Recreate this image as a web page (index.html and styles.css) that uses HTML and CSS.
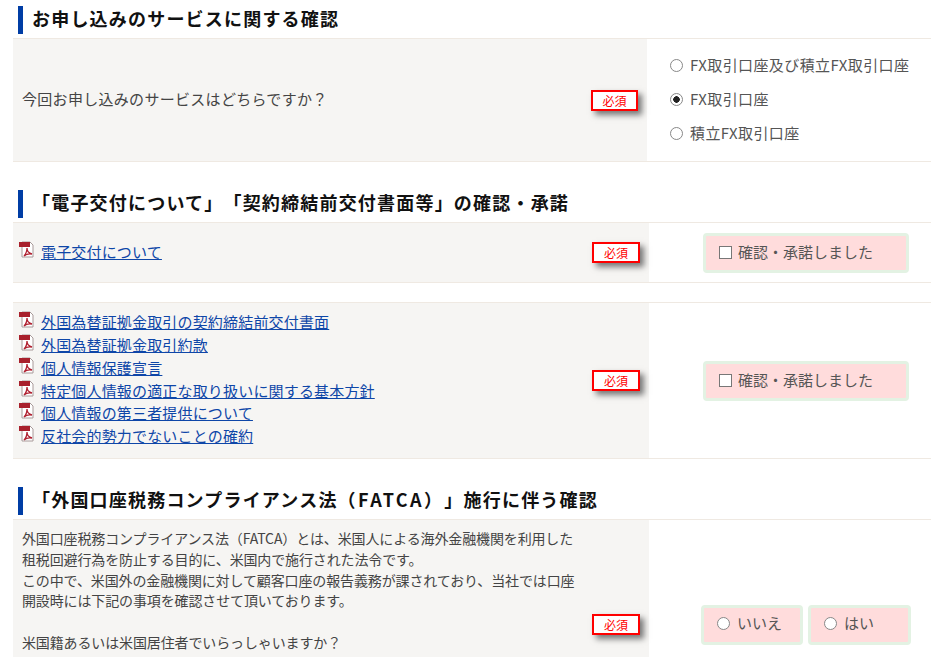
FILE: index.html
```html
<!DOCTYPE html>
<html lang="ja">
<head>
  <meta charset="UTF-8" />
  <title>お申し込みの確認</title>
  <meta name="viewport" content="width=device-width, initial-scale=1" />
  <link rel="stylesheet" href="styles.css">
</head>
<body>
  <svg class="defs" width="0" height="0">
    <symbol id="pdf" viewBox="0 0 15 17">
      <path d="M3 1h8l3 3v12H3z" fill="#fff" stroke="#a89a9a"/>
      <path d="M0 1h11v5H0z" fill="#a8202c"/>
      <path d="M5 15c2-2 3-5 3-8 0 3 1 5 5 6-3-.5-6 0-8 2z" fill="none" stroke="#b02030" stroke-width="1.3"/>
    </symbol>
  </svg>

  <main>
    <section class="section">
      <h2 class="title">お申し込みのサービスに関する確認</h2>
      <div class="row row-service">
        <div class="ask ask-narrow">
          <p class="question">今回お申し込みのサービスはどちらですか？</p>
          <span class="must">必須</span>
        </div>
        <div class="answer options">
          <label class="option"><span class="radio"></span>FX取引口座及び積立FX取引口座</label>
          <label class="option"><span class="radio checked"></span>FX取引口座</label>
          <label class="option"><span class="radio"></span>積立FX取引口座</label>
        </div>
      </div>
    </section>

    <section class="section">
      <h2 class="title">「電子交付について」「契約締結前交付書面等」の確認・承諾</h2>
      <div class="row row-single">
        <div class="ask ask-top">
          <ul class="docs">
            <li><svg class="pdf"><use href="#pdf"/></svg><a href="#">電子交付について</a></li>
          </ul>
          <span class="must">必須</span>
        </div>
        <div class="answer">
          <label class="pick pick-wide"><span class="check"></span>確認・承諾しました</label>
        </div>
      </div>
      <div class="row row-docs">
        <div class="ask">
          <ul class="docs">
            <li><svg class="pdf"><use href="#pdf"/></svg><a href="#">外国為替証拠金取引の契約締結前交付書面</a></li>
            <li><svg class="pdf"><use href="#pdf"/></svg><a href="#">外国為替証拠金取引約款</a></li>
            <li><svg class="pdf"><use href="#pdf"/></svg><a href="#">個人情報保護宣言</a></li>
            <li><svg class="pdf"><use href="#pdf"/></svg><a href="#">特定個人情報の適正な取り扱いに関する基本方針</a></li>
            <li><svg class="pdf"><use href="#pdf"/></svg><a href="#">個人情報の第三者提供について</a></li>
            <li><svg class="pdf"><use href="#pdf"/></svg><a href="#">反社会的勢力でないことの確約</a></li>
          </ul>
          <span class="must">必須</span>
        </div>
        <div class="answer">
          <label class="pick pick-wide"><span class="check"></span>確認・承諾しました</label>
        </div>
      </div>
    </section>

    <section class="section">
      <h2 class="title">「外国口座税務コンプライアンス法<span class="latin">（FATCA）</span>」施行に伴う確認</h2>
      <div class="row row-fatca">
        <div class="ask ask-fatca">
          <p class="note">外国口座税務コンプライアンス法（FATCA）とは、米国人による海外金融機関を利用した<br>租税回避行為を防止する目的に、米国内で施行された法令です。<br>この中で、米国外の金融機関に対して顧客口座の報告義務が課されており、当社では口座<br>開設時には下記の事項を確認させて頂いております。<br><br>米国籍あるいは米国居住者でいらっしゃいますか？</p>
          <span class="must">必須</span>
        </div>
        <div class="answer answer-pair">
          <label class="pick pick-no"><span class="radio"></span>いいえ</label>
          <label class="pick pick-yes"><span class="radio"></span>はい</label>
        </div>
      </div>
    </section>
  </main>
</body>
</html>
```

FILE: styles.css
```css
html, body { margin: 0; }
body { font-family: "Noto Sans CJK JP", "Liberation Sans", sans-serif; font-size: 15px; color: #444; background: white; text-spacing-trim: space-all; }
main { padding: 6px 0 0 13px; }
p { margin: 0; }
.defs { position: absolute; }

.section { margin-bottom: 28px; }
.section:last-child { margin-bottom: 0; }
.title { margin: 0 0 4px 5px; height: 28px; border-left: 5px solid #003da5; padding-left: 9px; font-size: 18px; line-height: 25px; font-weight: 700; letter-spacing: 1.2px; color: #111; white-space: nowrap; }
.latin { letter-spacing: 2.4px; }

.row { display: flex; border-top: 1px solid #efe9e2; border-bottom: 1px solid #efe9e2; margin-bottom: 19px; }
.row:last-child { margin-bottom: 0; }
.row-service { height: 122px; }
.row-single { height: 59px; }
.row-docs { height: 155px; }
.row-fatca { height: 138px; border-bottom: none; }

.ask { width: 636px; flex: none; box-sizing: border-box; background: #f6f5f3; display: flex; align-items: center; justify-content: space-between; padding: 0 9px 0 5px; }
.ask-narrow { width: 634px; padding-left: 9px; }
.ask-narrow .must { width: 47px; }
.ask-top ul { align-self: flex-start; padding-top: 18px; }
.ask-fatca { padding-left: 9px; align-items: flex-start; }
.question { letter-spacing: 0.3px; padding-bottom: 4px; }
.note { font-size: 14px; line-height: 20.8px; letter-spacing: -0.13px; padding-top: 8px; white-space: nowrap; }

.must { flex: none; box-sizing: border-box; width: 48px; height: 21px; border: 2px solid #f00; background: white; color: #f00; font-size: 12px; font-weight: 400; line-height: 17px; text-align: center; box-shadow: 4px 4px 6px #777; }
.ask-fatca .must { align-self: flex-end; margin-bottom: 23px; }

.docs { list-style: none; margin: 0; padding: 0 0 2px; }
.docs li { display: flex; align-items: flex-start; height: 22.8px; line-height: 21px; }
.docs a { color: #0e46a8; white-space: nowrap; letter-spacing: 0.17px; }
.pdf { width: 15px; height: 17px; margin: 0 7px 0 1px; flex: none; }

.answer { flex: 1; display: flex; align-items: center; padding-left: 54px; }
.options { flex-direction: column; align-items: flex-start; justify-content: center; gap: 8px; padding-left: 23px; }
.option { display: flex; align-items: center; height: 22px; padding-bottom: 4px; white-space: nowrap; color: #555; letter-spacing: 0.4px; }
.option .radio { margin-top: 3px; }

.radio { flex: none; box-sizing: border-box; width: 13px; height: 13px; border: 1px solid #888; border-radius: 50%; background: white; margin-right: 7px; }
.checked { background: radial-gradient(circle, #222 0 3px, white 3.5px); }
.check { flex: none; box-sizing: border-box; width: 13px; height: 13px; border: 1px solid #777; background: white; margin: 3px 6px 0 0; }

.pick { box-sizing: border-box; display: flex; align-items: center; height: 40px; padding-bottom: 3px; border: 3px solid #e3f2e3; border-radius: 4px; background: #ffdcdc; white-space: nowrap; color: #555; }
.pick-wide { width: 206px; padding-left: 13px; }
.answer-pair { align-items: flex-end; padding: 0 0 13px 52px; gap: 5px; }
.pick-no { width: 102px; padding: 0 0 6px 13px; }
.pick-yes { width: 103px; padding: 0 0 6px 13px; }
.pick .radio { margin-top: 2px; }
```
